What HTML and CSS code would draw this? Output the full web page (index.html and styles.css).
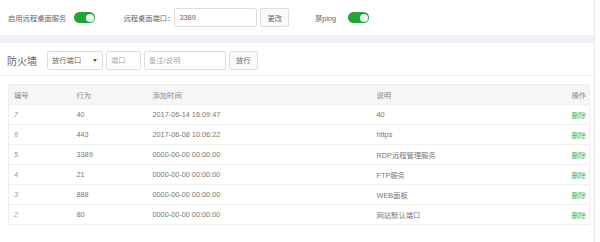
FILE: index.html
```html
<!DOCTYPE html>
<html lang="zh-CN">
<head>
    <meta charset="UTF-8">
    <title>安全</title>
    <link rel="stylesheet" href="styles.css">
</head>
<body>

<div class="page">
    <!-- remote desktop / ping settings -->
    <div class="topbar">
        <span class="label">启用远程桌面服务</span>
        <span class="switch"></span>
        <span class="label port-label">远程桌面端口：</span>
        <input type="text" class="port-input" value="3389">
        <button class="btn">更改</button>
        <span class="label ping-label">禁ping</span>
        <span class="switch"></span>
    </div>

    <div class="band"></div>

    <!-- firewall -->
    <div class="panel">
        <div class="toolbar">
            <h2>防火墙</h2>
            <div class="select">放行端口</div>
            <input type="text" class="in-port" placeholder="端口">
            <input type="text" class="in-note" placeholder="备注/说明">
            <button class="btn">放行</button>
        </div>

        <table class="rules">
            <thead>
                <tr>
                    <th class="c-id">编号</th>
                    <th class="c-act">行为</th>
                    <th class="c-time">添加时间</th>
                    <th class="c-note">说明</th>
                    <th class="c-op">操作</th>
                </tr>
            </thead>
            <tbody>
                <tr><td class="id">7</td><td>40</td><td>2017-06-14 16:09:47</td><td>40</td><td class="c-op"><a>删除</a></td></tr>
                <tr><td class="id">6</td><td>443</td><td>2017-06-08 10:06:22</td><td>https</td><td class="c-op"><a>删除</a></td></tr>
                <tr><td class="id">5</td><td>3389</td><td>0000-00-00 00:00:00</td><td>RDP远程管理服务</td><td class="c-op"><a>删除</a></td></tr>
                <tr><td class="id">4</td><td>21</td><td>0000-00-00 00:00:00</td><td>FTP服务</td><td class="c-op"><a>删除</a></td></tr>
                <tr><td class="id">3</td><td>888</td><td>0000-00-00 00:00:00</td><td>WEB面板</td><td class="c-op"><a>删除</a></td></tr>
                <tr><td class="id">2</td><td>80</td><td>0000-00-00 00:00:00</td><td>网站默认端口</td><td class="c-op"><a>删除</a></td></tr>
            </tbody>
        </table>
    </div>
</div>

</body>
</html>
```

FILE: styles.css
```css
/* Global */

* {
  box-sizing: border-box;
  margin: 0;
  padding: 0;
}

body {
  font-family: "Liberation Sans", "Noto Sans CJK SC", sans-serif;
  font-size: 7.3px;
  color: #777;
  background-color: #fff;
}

.page {
  width: 595px;
  height: 242px;
  border-right: 1px solid #e8e8e8;
}

/* Top settings bar */

.topbar {
  display: flex;
  align-items: center;
  height: 35px;
  padding-left: 8px;
}

.label {
  color: #666;
}

.switch {
  position: relative;
  width: 21px;
  height: 11px;
  margin-left: 8px;
  border-radius: 6px;
  background-color: #20a53a;
}

.switch::after {
  content: "";
  position: absolute;
  top: 1.5px;
  right: 1.5px;
  width: 8px;
  height: 8px;
  border-radius: 50%;
  background-color: #eef8ef;
}

.port-label {
  margin-left: 28px;
}

input {
  height: 19px;
  padding: 0 4px;
  border: 1px solid #ddd;
  border-radius: 2px;
  font-family: inherit;
  font-size: 7.3px;
  color: #666;
  outline: none;
}

input::placeholder {
  color: #aaa;
}

.port-input {
  width: 83px;
}

.btn {
  height: 19px;
  padding: 0 6px;
  margin-left: 3px;
  border: 1px solid #ddd;
  border-radius: 2px;
  background-color: #fafafa;
  font-family: inherit;
  font-size: 7.3px;
  color: #666;
}

.ping-label {
  margin-left: 26px;
  margin-right: 4px;
}

/* Gray separator */

.band {
  height: 8px;
  background-color: #eef0f5;
}

/* Firewall panel */

.toolbar {
  display: flex;
  align-items: center;
  height: 33px;
  padding-left: 7px;
  padding-top: 2px;
  border-bottom: 1px solid #f0f0f0;
}

.toolbar h2 {
  font-size: 10px;
  font-weight: normal;
  color: #666;
  margin-right: 10px;
}

.select {
  position: relative;
  width: 56px;
  height: 19px;
  line-height: 17px;
  padding-left: 4px;
  border: 1px solid #ddd;
  border-radius: 2px;
  color: #666;
}

.select::after {
  content: "";
  position: absolute;
  top: 7px;
  right: 5px;
  border-left: 2px solid transparent;
  border-right: 2px solid transparent;
  border-top: 3px solid #555;
}

.in-port {
  width: 35px;
  margin-left: 3px;
}

.in-note {
  width: 82px;
  margin-left: 3px;
}

/* Rules table */

.rules {
  width: 582px;
  margin: 8px 0 0 8px;
  border-collapse: collapse;
  border: 1px solid #eee;
}

.rules th,
.rules td {
  height: 20px;
  padding: 0 0 0 5px;
  text-align: left;
  font-weight: normal;
  border-bottom: 1px solid #eee;
}

.rules thead tr {
  background-color: #f6f6f6;
}

.rules th {
  color: #888;
}

.c-id { width: 63px; }
.c-act { width: 76px; }
.c-time { width: 224px; }
.c-note { width: 189px; }

.rules .c-op {
  text-align: right;
  padding-right: 3px;
}

.id {
  font-style: italic;
  color: #999;
}

.rules a {
  color: #3bae50;
}
```
